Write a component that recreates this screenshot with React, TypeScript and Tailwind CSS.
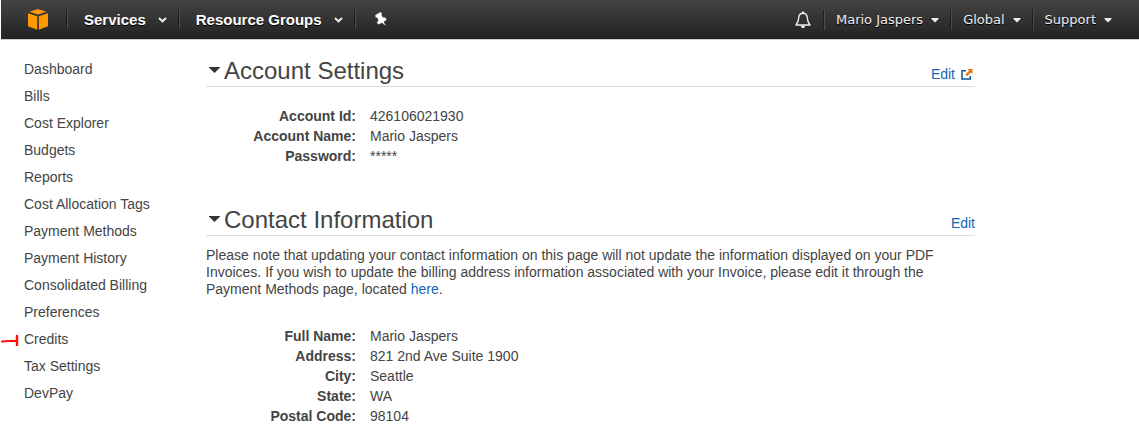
import { useState, type ReactNode } from "react";

const navItems = [
  "Dashboard",
  "Bills",
  "Cost Explorer",
  "Budgets",
  "Reports",
  "Cost Allocation Tags",
  "Payment Methods",
  "Payment History",
  "Consolidated Billing",
  "Preferences",
  "Credits",
  "Tax Settings",
  "DevPay",
];

const accountRows: [string, string][] = [
  ["Account Id:", "426106021930"],
  ["Account Name:", "Mario Jaspers"],
  ["Password:", "*****"],
];

const contactRows: [string, string][] = [
  ["Full Name:", "Mario Jaspers"],
  ["Address:", "821 2nd Ave Suite 1900"],
  ["City:", "Seattle"],
  ["State:", "WA"],
  ["Postal Code:", "98104"],
];

function Divider() {
  return <span className="h-5 w-0.5 shrink-0 border-l border-r border-l-[#1c1c1c] border-r-[#4c4c4c]" />;
}

function Logo() {
  return (
    <svg width="20" height="21" viewBox="0 0 20 21" fill="#ff9900" aria-hidden="true">
      <path d="M10 0 18.5 2.7 10 5.6 1.5 2.7Z" />
      <path d="M0 4.2 9.2 7.2V20.8L0 17.3Z" />
      <path d="M20 4.2 10.8 7.2V20.8L20 17.3Z" />
    </svg>
  );
}

function Chevron() {
  return (
    <svg width="9" height="6" viewBox="0 0 9 6" fill="none" stroke="#f0f0f0" strokeWidth="2" className="mt-0.5" aria-hidden="true">
      <path d="M1 1 4.5 4.3 8 1" />
    </svg>
  );
}

function Caret() {
  return (
    <svg width="8" height="5" viewBox="0 0 8 5" fill="#eeeeee" aria-hidden="true">
      <path d="M.5 0H7.5V1L4 4.5 .5 1Z" />
    </svg>
  );
}

function Pin() {
  return (
    <svg width="14" height="14" viewBox="0 0 14 14" fill="#ffffff" aria-hidden="true">
      <path d="M1.2 3.2 6.6 0 8 1.8 7.4 3 9 5.6 11.4 5.6 12.6 8 9.6 9.8 11.8 13.8 7.9 10.8 4.2 12.6 3 10.4 4.5 8.2 3.2 5.5 1.8 5.4Z" />
    </svg>
  );
}

function Bell() {
  return (
    <svg width="16" height="18" viewBox="0 0 16 18" fill="none" stroke="#f0f0f0" strokeWidth="1.4" aria-hidden="true">
      <path d="M8 2.2C5.2 2.2 4 4.1 3.8 6.3 3.6 10 3.1 11.7 1 14H15C12.9 11.7 12.4 10 12.2 6.3 12 4.1 10.8 2.2 8 2.2Z" strokeLinejoin="round" />
      <path d="M8 .5V2" strokeWidth="2" />
      <path d="M5.8 14.7H10.2C10 16.2 9.2 17 8 17S6 16.2 5.8 14.7Z" fill="#f0f0f0" stroke="none" />
    </svg>
  );
}

function ExternalIcon() {
  return (
    <svg width="12" height="11" viewBox="0 0 12 11" fill="none" className="mr-0.5" aria-hidden="true">
      <path d="M5 1.8H1V10H9.2V7" stroke="#10559a" strokeWidth="1.5" />
      <path d="M6.6 0H11.5V5L10 3.6 6.2 7.2 4.4 5.4 8.1 1.7Z" fill="#e47911" />
    </svg>
  );
}

function MenuButton({ label }: { label: string }) {
  return (
    <button type="button" className="flex items-center gap-3 pr-[11px] pl-4 text-[15px] font-bold text-white [text-shadow:0_1px_0_#000]">
      {label}
      <Chevron />
    </button>
  );
}

function AccountButton({ label }: { label: string }) {
  return (
    <button
      type="button"
      className="flex items-center gap-2 px-[11px] pt-0.5 font-['DejaVu_Sans',sans-serif] text-[13px] text-[#eeeeee] [text-shadow:0_1px_0_#000]"
    >
      {label}
      <Caret />
    </button>
  );
}

function Section({ title, edit, children }: { title: string; edit: ReactNode; children: ReactNode }) {
  const [open, setOpen] = useState(true);
  return (
    <section>
      <div className="flex items-end justify-between border-b border-[#dddddd]">
        <h2 className="text-2xl/[30px]">
          <button type="button" aria-expanded={open} onClick={() => setOpen(!open)} className="flex items-center gap-1 pb-px pl-[3px] leading-[29px]">
            <svg width="11" height="8" viewBox="0 0 11 8" fill="#333333" className={open ? "" : "-rotate-90"} aria-hidden="true">
              <path d="M0 0H11V.5L5.5 6 0 .5Z" />
            </svg>
            {title}
          </button>
        </h2>
        <a href="#edit" className="flex items-center gap-1.5 pb-0.5 leading-5 text-[#1166bb]">
          {edit}
        </a>
      </div>
      {open && children}
    </section>
  );
}

function DetailRows({ rows }: { rows: [string, string][] }) {
  return (
    <dl className="leading-5">
      {rows.map(([label, value]) => (
        <div key={label} className="flex gap-3.5">
          <dt className="w-[150px] text-right font-bold">{label}</dt>
          <dd>{value}</dd>
        </div>
      ))}
    </dl>
  );
}

export default function App() {
  return (
    <div className="bg-white font-['Liberation_Sans',Arial,sans-serif] text-sm text-[#444444]">
      <header className="ml-px flex h-10 items-center justify-between border-b border-[#cccccc] bg-linear-to-b from-[#444444] to-[#222222]">
        <div className="flex items-center">
          <a href="#home" aria-label="Console home" className="pr-[18px] pl-[27px]">
            <Logo />
          </a>
          <Divider />
          <MenuButton label="Services" />
          <Divider />
          <MenuButton label="Resource Groups" />
          <Divider />
          <button type="button" aria-label="Pin shortcuts" className="px-[18px]">
            <Pin />
          </button>
        </div>
        <div className="flex items-center pr-4">
          <button type="button" aria-label="Notifications" className="px-3">
            <Bell />
          </button>
          <Divider />
          <AccountButton label="Mario Jaspers" />
          <Divider />
          <AccountButton label="Global" />
          <Divider />
          <AccountButton label="Support" />
        </div>
      </header>
      <div className="flex">
        <nav aria-label="Billing" className="w-[206px] shrink-0 pt-4 leading-[27px]">
          <ul>
            {navItems.map((item) => (
              <li key={item} className="relative pl-6">
                {item === "Credits" && (
                  <svg width="19" height="12" viewBox="0 0 19 12" fill="none" stroke="#ff1010" className="absolute top-2 left-0" aria-hidden="true">
                    <path d="M2 7.5C7 6.5 11 7.3 17 6.8" strokeWidth="2" strokeLinecap="round" />
                    <path d="M17 2V11" strokeWidth="2.4" strokeLinecap="round" />
                  </svg>
                )}
                <a href="#section">{item}</a>
              </li>
            ))}
          </ul>
        </nav>
        <main className="flex max-w-[769px] grow flex-col gap-[39px] pt-4">
          <Section
            title="Account Settings"
            edit={
              <>
                Edit
                <ExternalIcon />
              </>
            }
          >
            <div className="pt-[19px]">
              <DetailRows rows={accountRows} />
            </div>
          </Section>
          <Section title="Contact Information" edit="Edit">
            <p className="pt-[11px] pb-7 leading-[17px]">
              Please note that updating your contact information on this page will not update the information displayed on your PDF
              Invoices. If you wish to update the billing address information associated with your Invoice, please edit it through the
              Payment Methods page, located{" "}
              <a href="#payment-methods" className="text-[#1166bb]">
                here
              </a>
              .
            </p>
            <DetailRows rows={contactRows} />
          </Section>
        </main>
      </div>
    </div>
  );
}
